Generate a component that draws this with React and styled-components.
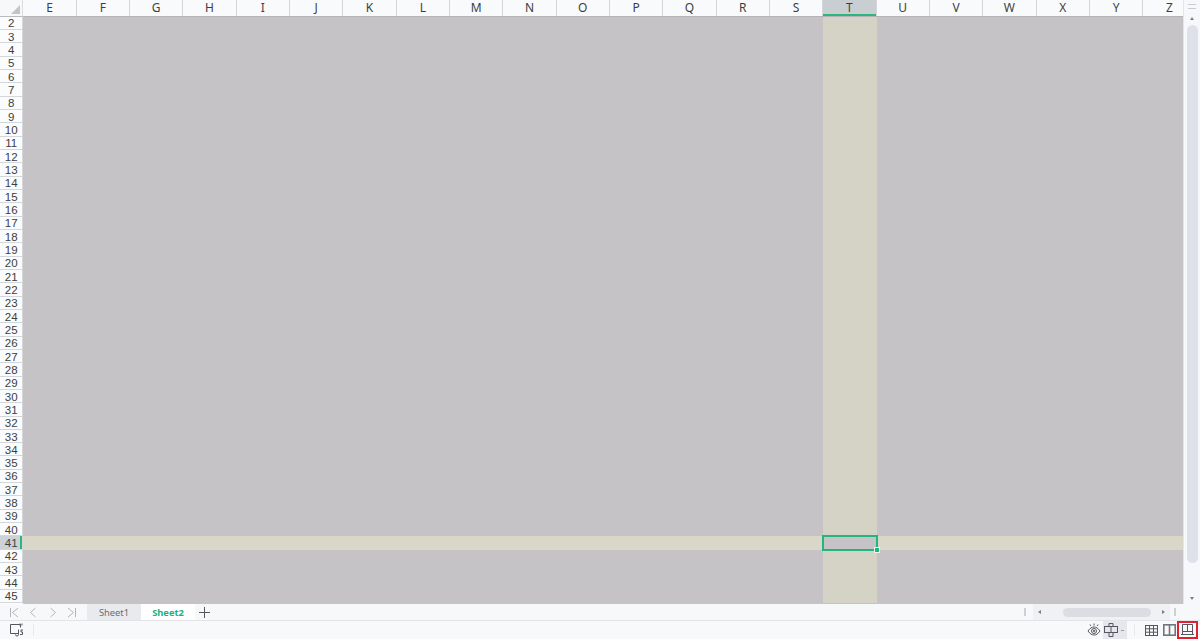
import React from "react";
import styled, { createGlobalStyle } from "styled-components";

const COL_W = 160 / 3;
const ROW_H = 40 / 3;
const columns = "EFGHIJKLMNOPQRSTUVWXYZ".split("");
const rows = Array.from({ length: 44 }, (_, i) => i + 2);

const Global = createGlobalStyle`
  html, body, #root { margin: 0; height: 100%; }
  body { overflow: hidden; background: #f7f8fa; font-family: "Noto Sans", "Liberation Sans", sans-serif; }
`;

const Page = styled.div`
  width: 1200px;
  height: 639px;
  display: flex;
  flex-direction: column;
  overflow: hidden;
`;

const Workspace = styled.div`
  height: 604px;
  display: flex;
  background: #f9fafc;
`;

const Sheet = styled.div`
  width: 1183px;
  display: grid;
  grid-template-columns: 23.33px 1fr;
  grid-template-rows: 16.67px 1fr;
  overflow: hidden;
`;

const Corner = styled.div`
  position: relative;
  background: #f7f8fa;
  border-right: 1px solid #dcdde0;
  border-bottom: 1px solid #b9babd;
  box-sizing: border-box;
  &::after {
    content: "";
    position: absolute;
    right: 2px;
    bottom: 2px;
    border-style: solid;
    border-width: 0 0 9px 9px;
    border-color: transparent transparent #c2c4c8 transparent;
  }
`;

const ColHeader = styled.div`
  display: flex;
  overflow: hidden;
  background: #f9fafc;
  border-bottom: 1px solid #b4b4b7;
  box-sizing: border-box;
`;

const ColCell = styled.div`
  flex: 0 0 ${COL_W}px;
  box-sizing: border-box;
  display: flex;
  align-items: center;
  justify-content: center;
  font-size: 12px;
  line-height: 13px;
  color: #3c3e42;
  border-right: 1px solid #d4d6d9;
  background: ${(p) => (p.$active ? "#c9ced3" : "transparent")};
  box-shadow: ${(p) => (p.$active ? "inset 0 -2px 0 #2cb57c" : "none")};
`;

const RowHeader = styled.div`
  display: flex;
  flex-direction: column;
  overflow: hidden;
  background: #fbfcfd;
`;

const RowCell = styled.div`
  flex: 0 0 ${ROW_H}px;
  min-height: 0;
  box-sizing: border-box;
  padding-top: 1px;
  display: flex;
  align-items: center;
  justify-content: center;
  font-family: "Liberation Sans", sans-serif;
  font-size: 11.5px;
  line-height: 12px;
  color: #3c3e42;
  border-bottom: 1px solid #d4d6d9;
  border-right: 1px solid #d4d6d9;
  background: ${(p) => (p.$active ? "#cdd2d6" : "transparent")};
  box-shadow: ${(p) => (p.$active ? "inset -2px 0 0 #2cb57c" : "none")};
`;

const Cells = styled.div`
  display: grid;
  grid-template-columns: repeat(22, ${COL_W}px);
  grid-template-rows: repeat(44, ${ROW_H}px);
  background: #c6c3c6;
  overflow: hidden;
`;

const ColStrip = styled.div`
  grid-column: 16;
  grid-row: 1 / -1;
  background: #d5d3c6;
`;

const RowStrip = styled.div`
  grid-column: 1 / -1;
  grid-row: 40;
  background: #d8d7c8;
`;

const ActiveCell = styled.div`
  grid-column: 16;
  grid-row: 40;
  margin: -1px;
  position: relative;
  box-sizing: border-box;
  border: 2px solid #24b47e;
  background: #c6c3c6;
  &::after {
    content: "";
    position: absolute;
    right: -3px;
    bottom: -3px;
    width: 4px;
    height: 4px;
    background: #24b47e;
    outline: 1px solid #eef2ee;
  }
`;

const VScroll = styled.div`
  flex: 1;
  display: flex;
  flex-direction: column;
  align-items: center;
  background: #f7f8fb;
  border-left: 1px solid #e4e5ea;
`;

const Splitter = styled.div`
  width: 8px;
  height: 3px;
  margin-top: 4px;
  border-top: 1px solid #c9cad0;
  border-bottom: 1px solid #c9cad0;
`;

const Arrow = styled.div`
  width: 0;
  height: 0;
  margin: ${(p) => (p.$down ? "3px 0 4px" : "8px 0 5px")};
  border-left: 2.5px solid transparent;
  border-right: 2.5px solid transparent;
  border-${(p) => (p.$down ? "top" : "bottom")}: 3px solid #7c7e85;
`;

const VThumb = styled.div`
  width: 11px;
  height: 538px;
  border-radius: 6px;
  background: #dfe1ea;
`;

const VTrack = styled.div`
  flex: 1;
`;

const SheetBar = styled.div`
  height: 16px;
  display: flex;
  align-items: stretch;
  background: #f7f8fa;
`;

const NavGroup = styled.div`
  width: 87px;
  padding-left: 9px;
  box-sizing: border-box;
  display: flex;
  align-items: center;
  gap: 8px;
`;

const Tab = styled.div`
  width: 54px;
  display: flex;
  align-items: center;
  justify-content: center;
  font-size: 9.33px;
  font-weight: ${(p) => (p.$active ? 700 : 400)};
  color: ${(p) => (p.$active ? "#22b07a" : "#6a6c72")};
  background: ${(p) => (p.$active ? "#ffffff" : "#e9eaee")};
`;

const AddTab = styled.div`
  width: 18px;
  display: flex;
  align-items: center;
  justify-content: center;
`;

const Spacer = styled.div`
  flex: 1;
`;

const HScroll = styled.div`
  width: 152px;
  margin-right: 24px;
  display: flex;
  align-items: center;
`;

const Tick = styled.div`
  width: 2px;
  height: 8px;
  background: #cfd0d4;
`;

const HTrack = styled.div`
  flex: 1;
  height: 100%;
  margin: 0 4px 0 7px;
  background: #f0f1f4;
  display: flex;
  align-items: center;
  padding: 0 5px;
  box-sizing: border-box;
`;

const HArrow = styled.div`
  width: 0;
  height: 0;
  border-top: 2.5px solid transparent;
  border-bottom: 2.5px solid transparent;
  border-${(p) => (p.$right ? "left" : "right")}: 3px solid #7c7e85;
`;

const HThumb = styled.div`
  width: 88px;
  height: 9px;
  margin: 0 11px 0 22px;
  border-radius: 5px;
  background: #dcdde2;
`;

const StatusBar = styled.div`
  height: 19px;
  display: flex;
  align-items: center;
  background: #f8f9fb;
  border-top: 1px solid #e3e4e8;
  box-sizing: border-box;
`;

const StatusLeft = styled.div`
  width: 34px;
  padding-left: 9px;
  box-sizing: border-box;
  display: flex;
  align-items: center;
  border-right: 1px solid #e8e9ec;
  height: 12px;
`;

const StatusRight = styled.div`
  display: flex;
  align-items: center;
  height: 100%;
  padding-right: 2px;
`;

const IconSlot = styled.div`
  display: flex;
  align-items: center;
  justify-content: center;
  height: 18px;
  width: ${(p) => p.$w}px;
  margin-left: ${(p) => p.$gap || 0}px;
  box-sizing: border-box;
  background: ${(p) => (p.$shaded ? "#e6e7ec" : "transparent")};
  border: ${(p) => (p.$marked ? "2px solid #e0202e" : "none")};
`;

const Divider = styled.div`
  width: 1px;
  height: 12px;
  margin: 0 7px;
  background: #e8e9ec;
`;

const stroke = { fill: "none", stroke: "#55575e", strokeWidth: 1 };

const NavFirst = () => (
  <svg width="11" height="11" viewBox="0 0 11 11" fill="none" stroke="#b3b5bb"><path d="M1.5 1v9M9 1 3.5 5.5 9 10" /></svg>
);
const NavPrev = () => (
  <svg width="11" height="11" viewBox="0 0 11 11" fill="none" stroke="#b3b5bb"><path d="M7.5 1 2.5 5.500 7.500 10" /></svg>
);
const NavNext = () => (
  <svg width="11" height="11" viewBox="0 0 11 11" fill="none" stroke="#b3b5bb"><path d="M3.500 1 8.500 5.500 3.500 10" /></svg>
);
const NavLast = () => (
  <svg width="11" height="11" viewBox="0 0 11 11" fill="none" stroke="#b3b5bb"><path d="M9.500 1v9M2 1l5.500 4.500L2 10" /></svg>
);
const PlusIcon = () => (
  <svg width="11" height="11" viewBox="0 0 11 11" fill="none" stroke="#55575d"><path d="M5.500 0v11M0 5.500h11" /></svg>
);
const MacroIcon = () => (
  <svg width="15" height="14" viewBox="0 0 15 14" {...stroke}>
    <path d="M9 10.500H1.500v-9h10v3" />
    <path d="M11 .5v2M13 .5v2" />
    <path d="M9.500 6.500v5a1.500 1.500 0 0 1-3 0M14 7h-2v2h1.500v2.500H11" />
  </svg>
);
const EyeIcon = () => (
  <svg width="14" height="14" viewBox="0 0 14 14" {...stroke}>
    <path d="M1 8c2-3 4-4 6-4s4 1 6 4c-2 3-4 4-6 4s-4-1-6-4Z" />
    <circle cx="7" cy="8" r="2.500" />
    <circle cx="7" cy="8" r=".8" />
    <path d="M7 .5v2M3 1.500l1 1.500M11 1.500 10 3" />
  </svg>
);
const ReadingIcon = () => (
  <svg width="24" height="14" viewBox="0 0 24 14" {...stroke}>
    <rect x="1.500" y="3.500" width="13" height="6" />
    <path d="M6 3.500V.5h4v3M6 9.500v4h4v-4M8 3.500v6" />
    <path d="M18 7.500h3" stroke="#9a9ca3" />
  </svg>
);
const NormalView = () => (
  <svg width="13" height="11" viewBox="0 0 13 11" {...stroke}>
    <rect x=".5" y=".5" width="12" height="10" />
    <path d="M.5 3.800h12M.5 7.200h12M4.500.5v10M8.500.5v10" />
  </svg>
);
const LayoutView = () => (
  <svg width="13" height="12" viewBox="0 0 13 12" fill="none" stroke="#73757c" strokeWidth="1.600">
    <rect x=".8" y=".8" width="11.400" height="10.400" />
    <path d="M6.500.5v11" />
  </svg>
);
const PageBreakView = () => (
  <svg width="13" height="12" viewBox="0 0 13 12" {...stroke}>
    <path d="M1.500 10.500v-10h10v10M1.500 7.500h10M6.500.5v7M0 10.500h13" />
  </svg>
);

export default function App() {
  return (
    <Page>
      <Global />
      <Workspace>
        <Sheet>
          <Corner />
          <ColHeader>
            {columns.map((c) => (
              <ColCell key={c} $active={c === "T"}>{c}</ColCell>
            ))}
          </ColHeader>
          <RowHeader>
            {rows.map((r) => (
              <RowCell key={r} $active={r === 41}>{r}</RowCell>
            ))}
          </RowHeader>
          <Cells>
            <ColStrip />
            <RowStrip />
            <ActiveCell />
          </Cells>
        </Sheet>
        <VScroll>
          <Splitter />
          <Arrow />
          <VThumb />
          <VTrack />
          <Arrow $down />
        </VScroll>
      </Workspace>
      <SheetBar>
        <NavGroup>
          <NavFirst />
          <NavPrev />
          <NavNext />
          <NavLast />
        </NavGroup>
        <Tab>Sheet1</Tab>
        <Tab $active>Sheet2</Tab>
        <AddTab><PlusIcon /></AddTab>
        <Spacer />
        <HScroll>
          <Tick />
          <HTrack>
            <HArrow />
            <HThumb />
            <HArrow $right />
          </HTrack>
          <Tick />
        </HScroll>
      </SheetBar>
      <StatusBar>
        <StatusLeft><MacroIcon /></StatusLeft>
        <Spacer />
        <StatusRight>
          <IconSlot $w={19}><EyeIcon /></IconSlot>
          <IconSlot $w={24} $shaded><ReadingIcon /></IconSlot>
          <Divider />
          <IconSlot $w={18}><NormalView /></IconSlot>
          <IconSlot $w={15} $gap={2}><LayoutView /></IconSlot>
          <IconSlot $w={21} $marked><PageBreakView /></IconSlot>
        </StatusRight>
      </StatusBar>
    </Page>
  );
}
